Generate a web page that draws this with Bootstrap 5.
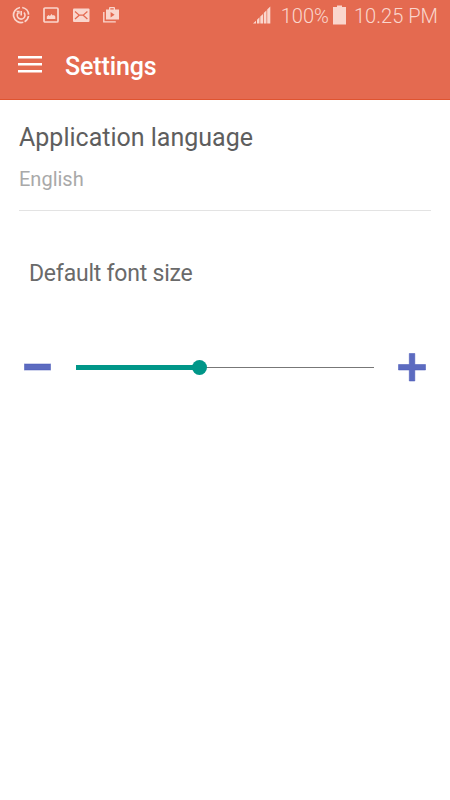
<!DOCTYPE html>
<html lang="en">
<head>
<meta charset="utf-8">
<meta name="viewport" content="width=device-width, initial-scale=1">
<title>Settings</title>
<link href="https://cdn.jsdelivr.net/npm/bootstrap@5.3.0/dist/css/bootstrap.min.css" rel="stylesheet">
<style>
body { font-family: Roboto, "Liberation Sans", sans-serif; height: 800px; overflow: hidden; }
svg { display: block; flex: none; }
.app-header { background: #e46a50; height: 100px; border-bottom: 1px solid #df5430; }
.status-bar { height: 30px; padding: 0 12px; color: #fad6cd; font-weight: 300; font-size: 20.1px; line-height: 30px; }
.status-icons { gap: 12px; }
.status-battery { margin: 0 8px 0 4px; }
.status-signal { margin-right: 10px; }
.status-text { white-space: nowrap; padding-top: 1px; }
.title-bar { height: 69px; padding: 2px 18px 0; gap: 23px; }
.page-title { font-size: 25px; letter-spacing: -.12px; line-height: 32px; font-weight: 500; padding-top: 2px; }
.menu-btn { line-height: 0; }
.language-row { margin: 0 19px; height: 111px; padding-top: 22px; border-bottom: 1px solid #e3e3e3; }
.row-title { font-size: 25px; line-height: 32px; color: #5e5e5e; }
.row-value { font-size: 20px; line-height: 26px; color: #a9a9a9; margin-top: 12px; }
.size-label { font-size: 23px; letter-spacing: -.22px; line-height: 30px; color: #6a6a6a; margin: 48px 29px 0; }
.size-control { height: 30px; margin: 63px 24px 0; }
.size-track { width: 298px; margin-left: 25px; }
.track-fill { width: 124px; height: 5px; background: #009688; }
.track-knob { width: 15px; height: 15px; background: #009688; margin: 0 -7px 0 -8px; z-index: 1; }
.track-rest { height: 1px; background: #777; }
</style>
<script src="https://cdn.jsdelivr.net/npm/bootstrap@5.3.0/dist/js/bootstrap.bundle.min.js"></script>
</head>
<body class="bg-white">
<header class="app-header">
  <div class="status-bar d-flex align-items-center justify-content-between">
    <div class="status-icons d-flex align-items-center">
      <svg width="18" height="18" viewBox="0 0 18 18" fill="none" stroke="#fad6cd">
        <path d="M10.2 1.5A7.6 7.6 0 0 1 16.6 8.6M16.5 10A7.6 7.6 0 0 1 12.6 15.7M11.3 16.3A7.6 7.6 0 1 1 8 1.5" stroke-width="1.7"/>
        <path d="M6.4 6.4A3.9 3.9 0 1 0 11.9 6.5M9.2 5V9.4" stroke-width="1.6"/>
        <path d="M4.6 5.4H7.1V7.8" stroke-width="1.2"/>
      </svg>
      <svg width="18" height="18" viewBox="0 0 18 18">
        <rect x="2" y="2" width="14" height="14" rx="1" fill="none" stroke="#fad6cd" stroke-width="1.7"/>
        <path d="M4.8 13V10.4L6.5 9 8 10 9.4 8 10.8 9.6 12 9 13.3 10.4V13Z" fill="#fad6cd"/>
      </svg>
      <svg width="18" height="18" viewBox="0 0 18 18">
        <rect x="1" y="2.5" width="16.5" height="13.5" rx="1" fill="#fad6cd"/>
        <path d="M3 5.6L7.2 9.2H11.2L15.4 5.6M3 12.9L7.2 9.2M15.4 12.9L11.2 9.2" fill="none" stroke="#e46a50" stroke-width="1.3"/>
      </svg>
      <svg width="18" height="18" viewBox="0 0 18 18">
        <path d="M1.8 6V15.9H13.8" fill="none" stroke="#fad6cd" stroke-width="1.4"/>
        <path fill="#fad6cd" fill-rule="evenodd" d="M4 3.6H7V2Q7 1 8 1H12Q13 1 13 2V3.6H17V13.5H4ZM8.3 3.6H11.7V2.2H8.3ZM8.6 6V11.4L12.6 8.7Z"/>
      </svg>
    </div>
    <div class="d-flex align-items-center">
      <svg class="status-signal" width="18" height="18" viewBox="0 0 18 18" fill="#fad6cd">
        <path d="M0 17.5L3 14.7V17.5ZM4 13.7L6.5 11.3V17.5H4ZM7.3 10.5L10 7.9V17.5H7.3ZM10.8 7.1L13.5 4.3V17.5H10.8ZM14.2 3.6L17.3 .5V17.5H14.2Z"/>
      </svg>
      <span class="status-text">100%</span>
      <svg class="status-battery" width="13" height="20" viewBox="0 0 13 20" fill="#fad6cd">
        <path d="M4 .5H9V2H13V19.5H0V2H4Z"/>
      </svg>
      <span class="status-text status-clock">10.25 PM</span>
    </div>
  </div>
  <div class="title-bar d-flex align-items-center text-white">
    <a href="#" class="menu-btn" aria-label="Menu">
      <svg width="24" height="24" viewBox="0 0 24 24" fill="#fff"><path d="M0 2H24V4.6H0ZM0 9H24V11.6H0ZM0 16H24V18.6H0Z"/></svg>
    </a>
    <h1 class="page-title mb-0">Settings</h1>
  </div>
</header>
<main>
  <section class="language-row">
    <div class="row-title"><span>Application language</span></div>
    <div class="row-value"><span>English</span></div>
  </section>
  <section>
    <div class="size-label"><span>Default font size</span></div>
    <div class="size-control d-flex align-items-center">
      <svg width="27" height="30" viewBox="0 0 27 30"><rect x=".5" y="12" width="26" height="6" fill="#5c6bc0" stroke="#4453b8" stroke-opacity=".5"/></svg>
      <div class="size-track d-flex align-items-center">
        <div class="track-fill"></div>
        <div class="track-knob rounded-circle"></div>
        <div class="track-rest flex-grow-1"></div>
      </div>
      <svg class="ms-auto" width="28" height="30" viewBox="0 0 28 30"><path d="M11.3 1.5H16.8V12.5H27.5V18H16.8V29H11.3V18H.5V12.5H11.3Z" fill="#5c6bc0" stroke="#4453b8" stroke-opacity=".5"/></svg>
    </div>
  </section>
</main>
</body>
</html>
